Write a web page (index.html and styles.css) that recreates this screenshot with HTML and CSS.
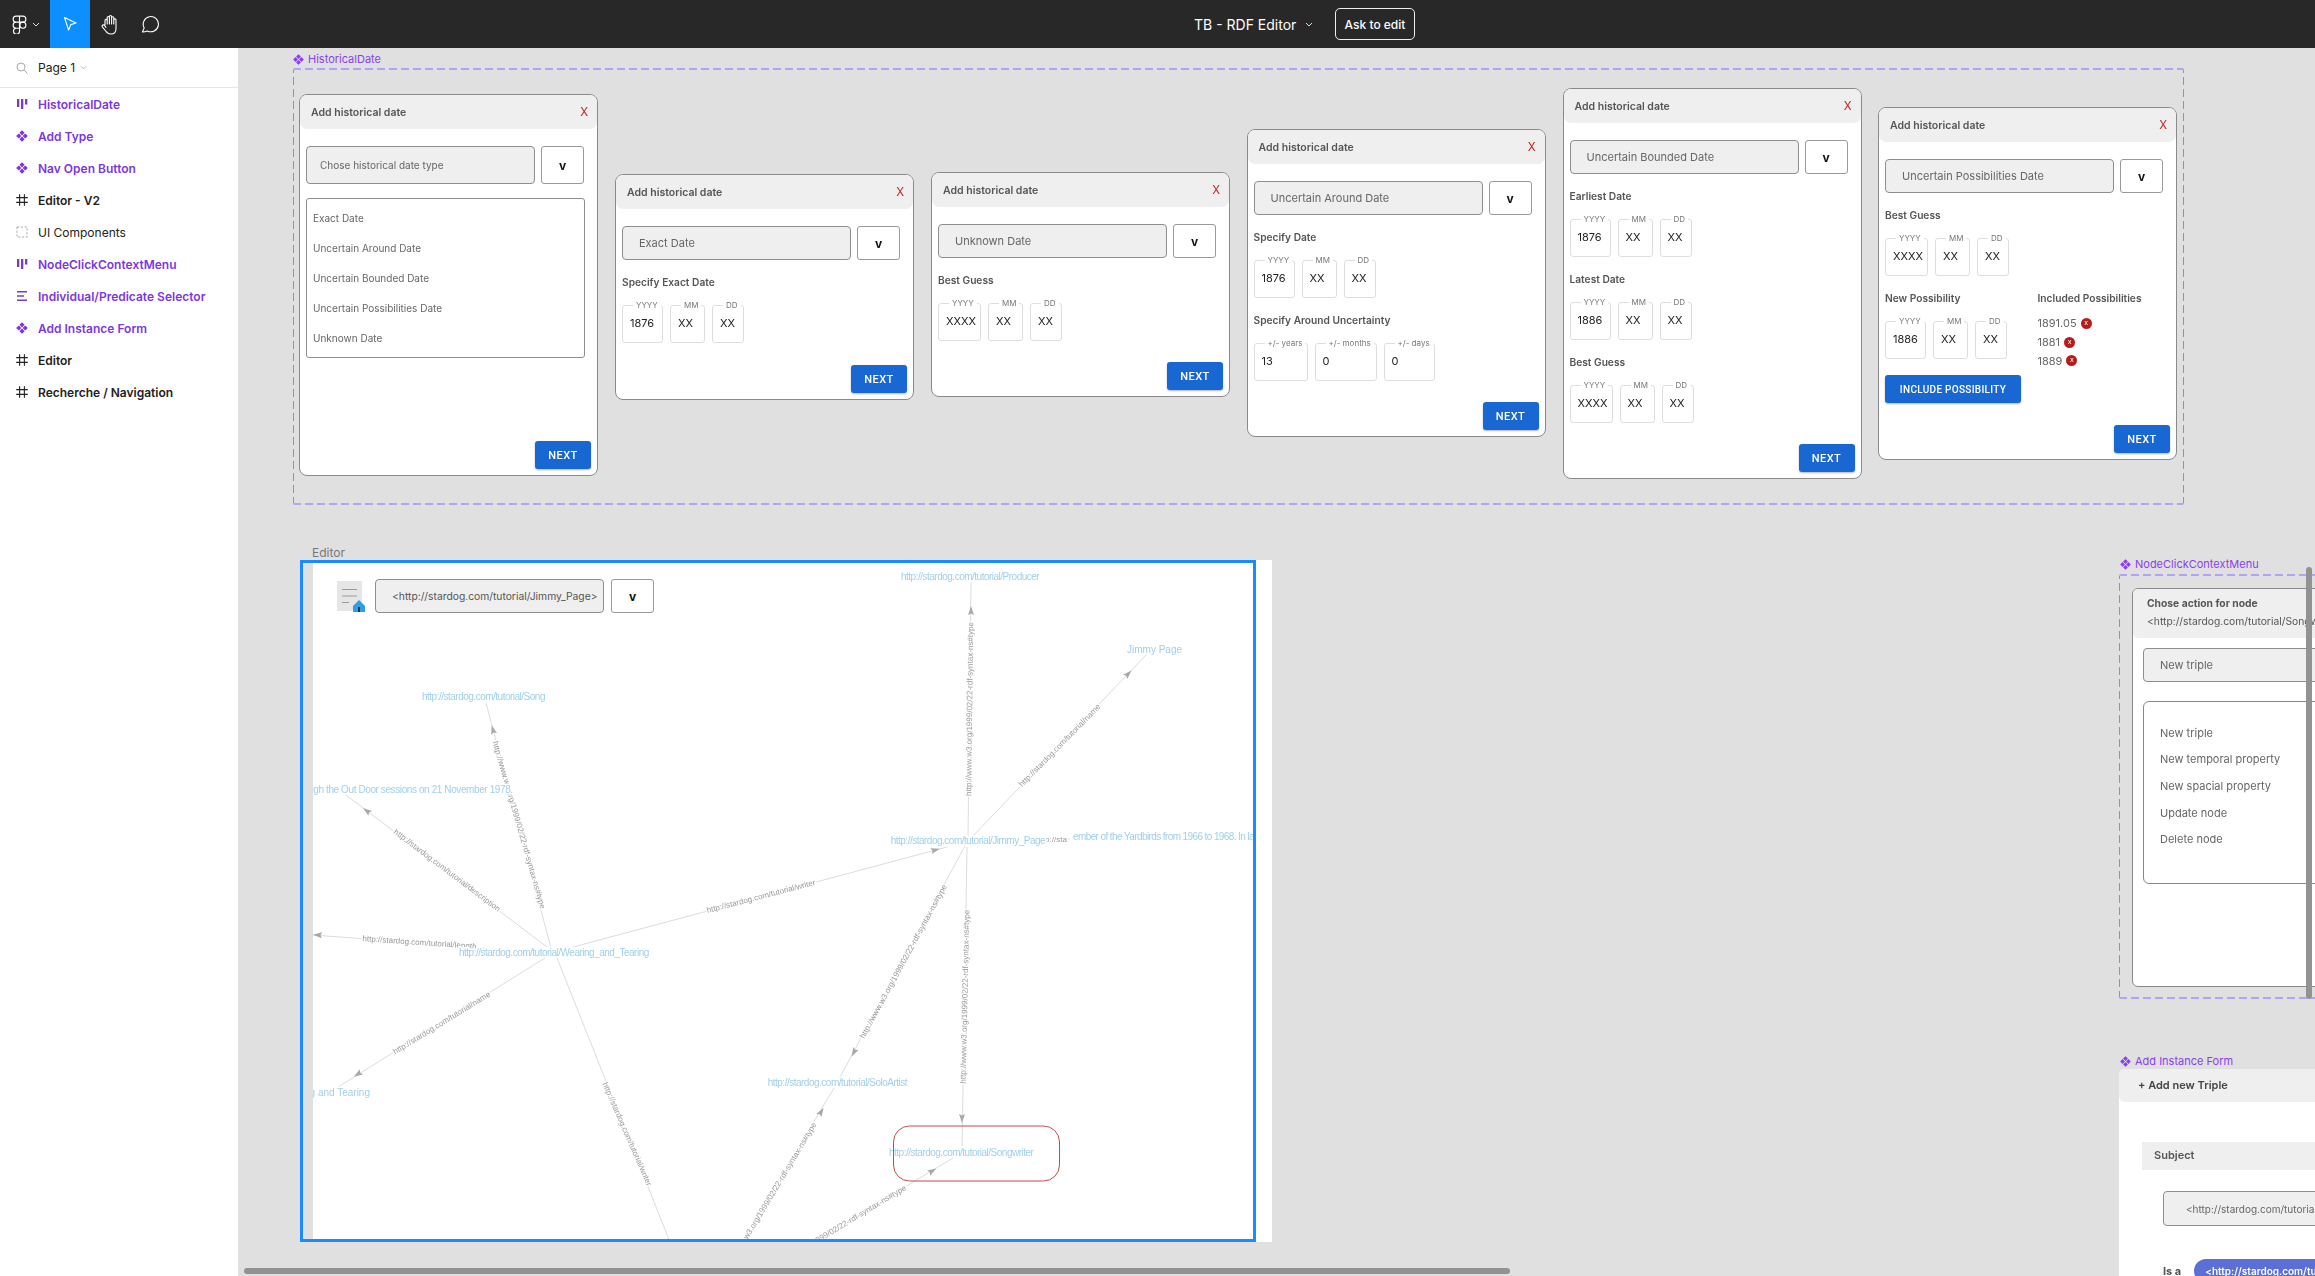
FILE: index.html
```html
<!DOCTYPE html>
<html lang="en">
<head>
    <meta charset="UTF-8">
    <title>TB - RDF Editor</title>
    <link rel="stylesheet" href="styles.css">
</head>
<body>
    <svg class="sprite" width="0" height="0">
        <symbol id="i-component" viewBox="0 0 12 12">
            <path d="M6 .2 8.6 2.8 6 5.4 3.4 2.8ZM2.8 3.4 5.4 6 2.8 8.6 .2 6ZM9.2 3.4 11.8 6 9.2 8.6 6.6 6ZM6 6.6 8.6 9.2 6 11.8 3.4 9.2Z" fill="currentColor"/>
        </symbol>
        <symbol id="i-bars" viewBox="0 0 12 12">
            <path d="M1 1h2.3v8H1ZM5 1h2.3v10H5ZM9 1h2.3v5.5H9Z" fill="currentColor"/>
        </symbol>
        <symbol id="i-lines" viewBox="0 0 12 12">
            <path d="M1 1h10v1.6H1ZM1 5.2h7v1.6H1ZM1 9.4h10V11H1Z" fill="currentColor"/>
        </symbol>
        <symbol id="i-hash" viewBox="0 0 12 12">
            <path d="M3.6 .2v11.6M8.4 .2v11.6M.2 3.6h11.6M.2 8.4h11.6" fill="none" stroke="currentColor" stroke-width="1.1"/>
        </symbol>
        <symbol id="i-dashed" viewBox="0 0 12 12">
            <rect x="1" y="1" width="10" height="10" fill="none" stroke="#aaa" stroke-width="1" stroke-dasharray="2.2 1.6"/>
        </symbol>
        <symbol id="i-chevron" viewBox="0 0 8 5">
            <path d="M1 1 4 4 7 1" fill="none" stroke="currentColor" stroke-width="1"/>
        </symbol>
    </svg>

    <header class="topbar">
        <div class="tools">
            <div class="tool-logo">
                <svg width="17" height="19" viewBox="1 0 13 17" fill="none" stroke="#fff" stroke-width="1">
                    <path d="M7.5 1H4.5a2.7 2.7 0 0 0 0 5.4h3ZM7.5 1h3a2.7 2.7 0 0 1 0 5.4h-3ZM7.5 6.4H4.5a2.7 2.7 0 0 0 0 5.4h3ZM7.5 11.8H4.5a2.7 2.7 0 1 0 3 2.7Z"/>
                    <circle cx="10.5" cy="9.1" r="2.7"/>
                </svg>
                <svg class="chev-white" width="8" height="5"><use href="#i-chevron"/></svg>
            </div>
            <div class="tool tool-active">
                <svg width="16" height="16" viewBox="0 0 16 16"><path d="M2.5 1.5 14 7 8.8 8.6 6.6 14Z" fill="none" stroke="#fff" stroke-width="1.1" stroke-linejoin="round"/></svg>
            </div>
            <div class="tool">
                <svg width="20" height="21" viewBox="0 0 20 21"><path d="M5 11V6.5a1.1 1.1 0 0 1 2.2 0V10M7.2 10V3.6a1.1 1.1 0 0 1 2.2 0V10M9.4 10V2.6a1.1 1.1 0 0 1 2.2 0V10M11.6 10V3.8a1.1 1.1 0 0 1 2.2 0V10M13.8 10V6a1.1 1.1 0 0 1 2.2 0v8.5c0 3.2-2 5.5-5 5.5-2.5 0-4-1-5.3-3L2.3 12.800c-.9-1.5 1.2-2.7 2.2-1.3L6 13.400" fill="none" stroke="#fff" stroke-width="1.1" stroke-linecap="round" stroke-linejoin="round"/></svg>
            </div>
            <div class="tool">
                <svg width="18" height="18" viewBox="0 0 18 18"><path d="M1.5 17 3.2 12.900A7.6 7.6 0 1 1 6.3 15.900C4.700 16.700 3 17 1.500 17Z" fill="none" stroke="#fff" stroke-width="1.1" stroke-linejoin="round"/></svg>
            </div>
        </div>
        <div class="doc-title">
            <span>TB - RDF Editor</span>
            <svg class="chev-white" width="8" height="5"><use href="#i-chevron"/></svg>
        </div>
        <button class="ask-btn">Ask to edit</button>
    </header>

    <div class="workspace">
        <aside class="sidebar">
            <div class="page-row">
                <svg width="12" height="12" viewBox="0 0 12 12" fill="none" stroke="#aaa" stroke-width="1"><circle cx="5" cy="5" r="4"/><path d="M8 8l3.5 3.5"/></svg>
                <span class="page-name">Page 1</span>
                <svg class="chev-gray" width="7" height="5"><use href="#i-chevron"/></svg>
            </div>
            <ul class="layers">
                <li class="layer purple"><svg width="12" height="12"><use href="#i-bars"/></svg>HistoricalDate</li>
                <li class="layer purple"><svg width="12" height="12"><use href="#i-component"/></svg>Add Type</li>
                <li class="layer purple"><svg width="12" height="12"><use href="#i-component"/></svg>Nav Open Button</li>
                <li class="layer dark"><svg width="12" height="12"><use href="#i-hash"/></svg>Editor - V2</li>
                <li class="layer"><svg width="12" height="12"><use href="#i-dashed"/></svg>UI Components</li>
                <li class="layer purple"><svg width="12" height="12"><use href="#i-bars"/></svg>NodeClickContextMenu</li>
                <li class="layer purple"><svg width="12" height="12"><use href="#i-lines"/></svg>Individual/Predicate Selector</li>
                <li class="layer purple"><svg width="12" height="12"><use href="#i-component"/></svg>Add Instance Form</li>
                <li class="layer dark"><svg width="12" height="12"><use href="#i-hash"/></svg>Editor</li>
                <li class="layer dark"><svg width="12" height="12"><use href="#i-hash"/></svg>Recherche / Navigation</li>
            </ul>
        </aside>

        <main class="canvas">
            <div class="frame-label label-historical"><svg width="11" height="11"><use href="#i-component"/></svg>HistoricalDate</div>
            <div class="dashed-frame frame-historical"></div>

            <section class="card card-type">
                <div class="card-head"><span>Add historical date</span><span class="close">X</span></div>
                <div class="card-body">
                    <div class="select-row tall">
                        <div class="select pad-small">Chose historical date type</div>
                        <div class="select-btn">v</div>
                    </div>
                    <ul class="type-list">
                        <li>Exact Date</li>
                        <li>Uncertain Around Date</li>
                        <li>Uncertain Bounded Date</li>
                        <li>Uncertain Possibilities Date</li>
                        <li>Unknown Date</li>
                    </ul>
                    <button class="primary next">NEXT</button>
                </div>
            </section>

            <section class="card card-exact">
                <div class="card-head"><span>Add historical date</span><span class="close">X</span></div>
                <div class="card-body">
                    <div class="select-row">
                        <div class="select">Exact Date</div>
                        <div class="select-btn">v</div>
                    </div>
                    <h4>Specify Exact Date</h4>
                    <div class="date-row">
                        <fieldset class="f-y"><legend>YYYY</legend>1876</fieldset>
                        <fieldset class="f-m"><legend>MM</legend>XX</fieldset>
                        <fieldset class="f-d"><legend>DD</legend>XX</fieldset>
                    </div>
                    <button class="primary next">NEXT</button>
                </div>
            </section>

            <section class="card card-unknown">
                <div class="card-head"><span>Add historical date</span><span class="close">X</span></div>
                <div class="card-body">
                    <div class="select-row">
                        <div class="select">Unknown Date</div>
                        <div class="select-btn">v</div>
                    </div>
                    <h4>Best Guess</h4>
                    <div class="date-row">
                        <fieldset class="f-yw"><legend>YYYY</legend>XXXX</fieldset>
                        <fieldset class="f-m"><legend>MM</legend>XX</fieldset>
                        <fieldset class="f-d"><legend>DD</legend>XX</fieldset>
                    </div>
                    <button class="primary next">NEXT</button>
                </div>
            </section>

            <section class="card card-around">
                <div class="card-head"><span>Add historical date</span><span class="close">X</span></div>
                <div class="card-body">
                    <div class="select-row">
                        <div class="select">Uncertain Around Date</div>
                        <div class="select-btn">v</div>
                    </div>
                    <h4>Specify Date</h4>
                    <div class="date-row">
                        <fieldset class="f-y"><legend>YYYY</legend>1876</fieldset>
                        <fieldset class="f-m"><legend>MM</legend>XX</fieldset>
                        <fieldset class="f-d"><legend>DD</legend>XX</fieldset>
                    </div>
                    <h4>Specify Around Uncertainty</h4>
                    <div class="date-row">
                        <fieldset class="f-years"><legend>+/- years</legend>13</fieldset>
                        <fieldset class="f-months"><legend>+/- months</legend>0</fieldset>
                        <fieldset class="f-days"><legend>+/- days</legend>0</fieldset>
                    </div>
                    <button class="primary next">NEXT</button>
                </div>
            </section>

            <section class="card card-bounded">
                <div class="card-head"><span>Add historical date</span><span class="close">X</span></div>
                <div class="card-body">
                    <div class="select-row">
                        <div class="select">Uncertain Bounded Date</div>
                        <div class="select-btn">v</div>
                    </div>
                    <h4>Earliest Date</h4>
                    <div class="date-row">
                        <fieldset class="f-y"><legend>YYYY</legend>1876</fieldset>
                        <fieldset class="f-m"><legend>MM</legend>XX</fieldset>
                        <fieldset class="f-d"><legend>DD</legend>XX</fieldset>
                    </div>
                    <h4>Latest Date</h4>
                    <div class="date-row">
                        <fieldset class="f-y"><legend>YYYY</legend>1886</fieldset>
                        <fieldset class="f-m"><legend>MM</legend>XX</fieldset>
                        <fieldset class="f-d"><legend>DD</legend>XX</fieldset>
                    </div>
                    <h4>Best Guess</h4>
                    <div class="date-row">
                        <fieldset class="f-yw"><legend>YYYY</legend>XXXX</fieldset>
                        <fieldset class="f-m"><legend>MM</legend>XX</fieldset>
                        <fieldset class="f-d"><legend>DD</legend>XX</fieldset>
                    </div>
                    <button class="primary next">NEXT</button>
                </div>
            </section>

            <section class="card card-possible">
                <div class="card-head"><span>Add historical date</span><span class="close">X</span></div>
                <div class="card-body">
                    <div class="select-row">
                        <div class="select">Uncertain Possibilities Date</div>
                        <div class="select-btn">v</div>
                    </div>
                    <h4>Best Guess</h4>
                    <div class="date-row">
                        <fieldset class="f-yw"><legend>YYYY</legend>XXXX</fieldset>
                        <fieldset class="f-m"><legend>MM</legend>XX</fieldset>
                        <fieldset class="f-d"><legend>DD</legend>XX</fieldset>
                    </div>
                    <div class="possible-cols">
                        <div class="possible-new">
                            <h4>New Possibility</h4>
                            <div class="date-row">
                                <fieldset class="f-y"><legend>YYYY</legend>1886</fieldset>
                                <fieldset class="f-m"><legend>MM</legend>XX</fieldset>
                                <fieldset class="f-d"><legend>DD</legend>XX</fieldset>
                            </div>
                            <button class="primary include">INCLUDE POSSIBILITY</button>
                        </div>
                        <div class="possible-list">
                            <h4>Included Possibilities</h4>
                            <div class="possible-item">1891.05 <span class="remove">x</span></div>
                            <div class="possible-item">1881 <span class="remove">x</span></div>
                            <div class="possible-item">1889 <span class="remove">x</span></div>
                        </div>
                    </div>
                    <button class="primary next">NEXT</button>
                </div>
            </section>

            <div class="editor-label">Editor</div>
            <section class="editor-sheet">
                <div class="editor-bar">
                    <svg class="doc-icon" width="28" height="31" viewBox="0 0 28 31">
                        <rect width="25" height="30" fill="#e6e6e6"/>
                        <path d="M5 8.5h15M5 15h15M5 21.5h7" stroke="#999" stroke-width="1"/>
                        <path d="M16 31V25L22 19 28 25V31Z" fill="#2d9fe6"/>
                        <rect x="21" y="26" width="2" height="5" fill="#234"/>
                    </svg>
                    <div class="select select-uri">&lt;http://stardog.com/tutorial/Jimmy_Page&gt;</div>
                    <div class="select-btn">v</div>
                </div>
                <svg class="graph" width="943" height="682" viewBox="313 560 943 682">
                    <g class="edges">
                        <line x1="551" y1="948" x2="486" y2="703"/>
                        <line x1="547" y1="947" x2="346" y2="795"/>
                        <line x1="487" y1="948" x2="313" y2="935"/>
                        <line x1="545" y1="958" x2="338" y2="1087"/>
                        <line x1="557" y1="958" x2="670" y2="1242"/>
                        <line x1="573" y1="947" x2="947" y2="847"/>
                        <line x1="968" y1="837" x2="971" y2="582"/>
                        <line x1="973" y1="836" x2="1147" y2="654"/>
                        <line x1="967" y1="847" x2="962" y2="1148"/>
                        <line x1="965" y1="846" x2="834" y2="1088"/>
                        <line x1="742" y1="1241" x2="834" y2="1088"/>
                        <line x1="815" y1="1241" x2="953" y2="1158"/>
                        <line x1="1046" y1="839" x2="1070" y2="839"/>
                    </g>
                    <g class="arrows">
                        <path transform="translate(493 730) rotate(-105)" d="M5 0-4-3-2.5 0-4 3Z"/>
                        <path transform="translate(367 811) rotate(-143)" d="M5 0-4-3-2.5 0-4 3Z"/>
                        <path transform="translate(318 935) rotate(-176)" d="M5 0-4-3-2.5 0-4 3Z"/>
                        <path transform="translate(358 1074) rotate(148)" d="M5 0-4-3-2.5 0-4 3Z"/>
                        <path transform="translate(935 850) rotate(-15)" d="M5 0-4-3-2.5 0-4 3Z"/>
                        <path transform="translate(971 611) rotate(-90)" d="M5 0-4-3-2.5 0-4 3Z"/>
                        <path transform="translate(1128 674) rotate(-46)" d="M5 0-4-3-2.5 0-4 3Z"/>
                        <path transform="translate(962 1118) rotate(91)" d="M5 0-4-3-2.5 0-4 3Z"/>
                        <path transform="translate(854 1052) rotate(118)" d="M5 0-4-3-2.5 0-4 3Z"/>
                        <path transform="translate(821 1112) rotate(-59)" d="M5 0-4-3-2.5 0-4 3Z"/>
                        <path transform="translate(932 1171) rotate(-31)" d="M5 0-4-3-2.5 0-4 3Z"/>
                    </g>
                    <g class="edge-labels">
                        <text transform="translate(519 825) rotate(74)">http://www.w3.org/1999/02/22-rdf-syntax-ns#type</text>
                        <text transform="translate(447 870.5) rotate(37)">http://stardog.com/tutorial/description</text>
                        <text transform="translate(419.5 942.5) rotate(4)">http://stardog.com/tutorial/length</text>
                        <text transform="translate(441.7 1023) rotate(-31.6)">http://stardog.com/tutorial/name</text>
                        <text transform="translate(627 1134) rotate(66.4)">http://stardog.com/tutorial/writer</text>
                        <text transform="translate(761 896.5) rotate(-14.6)">http://stardog.com/tutorial/writer</text>
                        <text transform="translate(969.7 709) rotate(-89.3)">http://www.w3.org/1999/02/22-rdf-syntax-ns#type</text>
                        <text transform="translate(1059.7 745.5) rotate(-45.4)">http://stardog.com/tutorial/name</text>
                        <text transform="translate(965 996.7) rotate(-88.8)">http://www.w3.org/1999/02/22-rdf-syntax-ns#type</text>
                        <text transform="translate(903.5 961.5) rotate(-61.5)">http://www.w3.org/1999/02/22-rdf-syntax-ns#type</text>
                        <text transform="translate(770 1197.6) rotate(-59)">http://www.w3.org/1999/02/22-rdf-syntax-ns#type</text>
                        <text transform="translate(831 1232) rotate(-31)">http://www.w3.org/1999/02/22-rdf-syntax-ns#type</text>
                        <text transform="translate(1056 839)">p://sta</text>
                    </g>
                    <g class="node-labels">
                        <text class="url" x="422" y="696">http://stardog.com/tutorial/Song</text>
                        <text class="note" x="512.7" y="789" text-anchor="end">Jimmy Page recorded through the Out Door sessions on 21 November 1978.</text>
                        <text class="url" x="459" y="952">http://stardog.com/tutorial/Wearing_and_Tearing</text>
                        <text x="370" y="1092" text-anchor="end">Wearing and Tearing</text>
                        <text class="url" x="901" y="576">http://stardog.com/tutorial/Producer</text>
                        <text x="1127" y="649">Jimmy Page</text>
                        <text class="url" x="890.7" y="840">http://stardog.com/tutorial/Jimmy_Page</text>
                        <text class="note-tight" x="1073" y="836">ember of the Yardbirds from 1966 to 1968. In later years</text>
                        <text class="url" x="767.7" y="1082">http://stardog.com/tutorial/SoloArtist</text>
                        <text class="url" x="889" y="1152">http://stardog.com/tutorial/Songwriter</text>
                    </g>
                    <rect class="node-mark" x="893.5" y="1126" width="166" height="55" rx="16"/>
                </svg>
            </section>
            <div class="editor-outline"></div>

            <div class="frame-label label-menu"><svg width="11" height="11"><use href="#i-component"/></svg>NodeClickContextMenu</div>
            <div class="dashed-frame frame-menu"></div>
            <section class="context-card">
                <div class="context-head">
                    <strong>Chose action for node</strong>
                    <span>&lt;http://stardog.com/tutorial/Songwriter&gt;</span>
                </div>
                <div class="context-body">
                    <div class="select select-context">New triple</div>
                    <ul class="context-list">
                        <li>New triple</li>
                        <li>New temporal property</li>
                        <li>New spacial property</li>
                        <li>Update node</li>
                        <li>Delete node</li>
                    </ul>
                </div>
            </section>

            <div class="frame-label label-form"><svg width="11" height="11"><use href="#i-component"/></svg>Add Instance Form</div>
            <section class="form-card">
                <div class="form-head">+ Add new Triple</div>
                <div class="subject">
                    <div class="subject-head">Subject</div>
                    <div class="subject-body">
                        <div class="select select-subject">&lt;http://stardog.com/tutorial/Songwriter&gt;</div>
                        <div class="is-a"><strong>Is a</strong><span class="pill">&lt;http://stardog.com/tutorial/Songwriter&gt;</span></div>
                    </div>
                </div>
            </section>

            <div class="scroll-v"></div>
            <div class="scroll-h"></div>
        </main>
    </div>
</body>
</html>
```

FILE: styles.css
```css
* {
    box-sizing: border-box;
}
html, body {
    margin: 0;
    height: 100%;
    overflow: hidden;
}
body {
    font-family: Inter, "Liberation Sans", sans-serif;
    font-size: 11px;
    color: #222;
    display: flex;
    flex-direction: column;
}
.sprite {
    position: absolute;
}
ul {
    list-style: none;
    margin: 0;
    padding: 0;
}

/* top bar */
.topbar {
    height: 48px;
    flex: none;
    background: #282828;
    color: #fff;
    display: flex;
    align-items: center;
}
.tools {
    display: flex;
    height: 48px;
    width: 170px;
}
.tool-logo {
    width: 50px;
    display: flex;
    align-items: center;
    padding-left: 11px;
    gap: 4px;
}
.tool {
    width: 40px;
    display: flex;
    align-items: center;
    justify-content: center;
}
.tool-active {
    background: #0d8fff;
}
.chev-white {
    color: #ddd;
}
.doc-title {
    margin-left: 1024px;
    font-size: 14px;
    display: flex;
    align-items: center;
    gap: 9px;
    width: 141px;
}
.ask-btn {
    width: 80px;
    height: 32px;
    background: transparent;
    color: #fff;
    border: 1px solid #eee;
    border-radius: 5px;
    font: 500 12px Inter, sans-serif;
}

/* left panel */
.workspace {
    flex: 1;
    display: flex;
    min-height: 0;
}
.sidebar {
    width: 238px;
    flex: none;
    background: #fff;
}
.page-row {
    height: 40px;
    border-bottom: 1px solid #e5e5e5;
    display: flex;
    align-items: center;
    padding-left: 16px;
    font-size: 12px;
}
.page-name {
    margin: 0 5px 0 10px;
}
.chev-gray {
    color: #aaa;
}
.layer {
    height: 32px;
    display: flex;
    align-items: center;
    gap: 10px;
    padding-left: 16px;
    font-size: 12px;
}
.purple {
    color: #7b36e8;
    font-weight: 600;
}
.dark {
    font-weight: 600;
}

/* canvas, everything in it sits on a free board */
.canvas {
    flex: 1;
    position: relative;
    overflow: hidden;
    background: #e0e0e0;
}
.frame-label {
    position: absolute;
    display: flex;
    align-items: center;
    gap: 4px;
    color: #8a3df2;
    font-size: 11px;
    line-height: 14px;
}
.label-historical { left: 55px; top: 4px; }
.label-menu { left: 1882px; top: 509px; }
.label-form { left: 1882px; top: 1006px; }
.dashed-frame {
    position: absolute;
    border-radius: 2px;
    background:
        repeating-linear-gradient(90deg, #b3a2f8 0 8px, transparent 8px 12px) left top / 100% 2px no-repeat,
        repeating-linear-gradient(90deg, #b3a2f8 0 8px, transparent 8px 12px) left bottom / 100% 2px no-repeat,
        repeating-linear-gradient(0deg, #9c7ff6 0 8px, transparent 8px 12px) left top / 1px 100% no-repeat,
        repeating-linear-gradient(0deg, #9c7ff6 0 8px, transparent 8px 12px) right top / 1px 100% no-repeat;
}
.frame-historical { left: 54.5px; top: 19.5px; width: 1891px; height: 437px; }
.frame-menu { left: 1881px; top: 526px; width: 500px; height: 425px; }

/* date cards */
.card {
    position: absolute;
    width: 299px;
    background: #fff;
    border: 1px solid #8a8a8a;
    border-radius: 8px;
    display: flex;
    flex-direction: column;
    filter: blur(.25px);
}
.card-type { left: 61px; top: 46px; height: 382px; }
.card-exact { left: 377px; top: 126px; height: 226px; }
.card-unknown { left: 693px; top: 124px; height: 225px; }
.card-around { left: 1008.5px; top: 81px; height: 308px; }
.card-bounded { left: 1324.5px; top: 40px; height: 391px; }
.card-possible { left: 1640px; top: 59px; height: 353px; }
.card-head {
    height: 34px;
    flex: none;
    background: #efefef;
    border-radius: 7px;
    display: flex;
    align-items: center;
    justify-content: space-between;
    padding: 0 9px 0 11px;
    font-weight: 600;
    font-size: 10.5px;
    color: #555;
}
.close {
    color: #c62020;
    font-weight: 400;
    font-size: 11.5px;
}
.card-body {
    flex: 1;
    display: flex;
    flex-direction: column;
    padding: 17px 6px 6px 6px;
}
.select-row {
    display: flex;
    gap: 6px;
    height: 34px;
}
.select-row.tall {
    height: 38px;
}
.select {
    width: 229px;
    flex: none;
    background: #efefef;
    border: 1px solid #8e8e8e;
    border-radius: 4px;
    display: flex;
    align-items: center;
    padding-left: 16px;
    color: #666;
    white-space: nowrap;
    overflow: hidden;
}
.pad-small {
    padding-left: 13px;
    font-size: 10px;
}
.select-btn {
    width: 43px;
    background: #fff;
    border: 1px solid #999;
    border-radius: 3px;
    display: flex;
    align-items: center;
    justify-content: center;
    font-weight: 700;
    font-size: 12px;
    color: #111;
}
.type-list {
    margin-top: 14px;
    width: 279px;
    height: 160px;
    border: 1px solid #8e8e8e;
    border-radius: 3px;
    padding: 4px 6px;
    color: #666;
    font-size: 10px;
}
.type-list li {
    height: 30px;
    line-height: 30px;
}
h4 {
    margin: 15px 0 11px;
    font-size: 10.2px;
    line-height: 14px;
    font-weight: 600;
    color: #555;
}
.date-row {
    display: flex;
    gap: 7px;
}
fieldset {
    margin: 0;
    height: 43px;
    padding: 0 0 0 7px;
    border: 1px solid #dedede;
    border-radius: 3px;
    line-height: 27px;
    color: #222;
    font-size: 11px;
}
legend {
    margin-left: 3px;
    padding: 0 3px;
    font-size: 8px;
    line-height: 10px;
    color: #777;
    white-space: nowrap;
}
.f-y { width: 41px; }
.f-yw { width: 43px; }
.f-m { width: 35px; }
.f-d { width: 32px; }
.f-years { width: 54px; }
.f-months { width: 62px; }
.f-days { width: 51px; }
.primary {
    background: #1967d2;
    color: #fff;
    border: none;
    border-radius: 3px;
    height: 28px;
    font: 500 11px Roboto, sans-serif;
    letter-spacing: .4px;
    box-shadow: 0 1px 2px rgba(0, 0, 0, .3);
}
.next {
    width: 56px;
    margin-top: auto;
    align-self: flex-end;
}
.include {
    width: 136px;
    margin-top: 16px;
    font-size: 10px;
    letter-spacing: .3px;
}
.possible-cols {
    display: flex;
}
.possible-new {
    width: 152.5px;
}
.possible-item {
    display: flex;
    align-items: center;
    gap: 4px;
    height: 18.7px;
    color: #666;
    font-size: 11px;
}
.possible-list h4 {
    margin-bottom: 9px;
}
.remove {
    width: 11px;
    height: 11px;
    border-radius: 50%;
    background: #b71c1c;
    color: #fff;
    font-size: 7px;
    line-height: 10px;
    text-align: center;
}

/* editor */
.editor-label {
    position: absolute;
    left: 74px;
    top: 497px;
    color: #777;
    font-size: 12px;
}
.editor-sheet {
    position: absolute;
    left: 75px;
    top: 512px;
    width: 959px;
    height: 682px;
    background: #fff;
}
.editor-outline {
    position: absolute;
    left: 62px;
    top: 512px;
    width: 956px;
    height: 682px;
    border: 3px solid #1a8cff;
}
.editor-bar {
    position: relative;
    z-index: 1;
    display: flex;
    height: 53px;
    padding: 19px 0 0 24px;
    gap: 7px;
}
.doc-icon {
    margin: 2px 3px 0 0;
}
.select-uri {
    font-size: 10.3px;
    color: #555;
}
.graph {
    position: absolute;
    left: 0;
    top: 0;
    filter: blur(.35px);
}
.edges line {
    stroke: #dcdcdc;
    stroke-width: 1;
}
.arrows path {
    fill: #a8a8a8;
}
.edge-labels text {
    font: 8px "Liberation Sans", sans-serif;
    fill: #999;
    text-anchor: middle;
    dominant-baseline: central;
    paint-order: stroke;
    stroke: #fff;
    stroke-width: 3px;
}
.node-labels text {
    font: 10px "Liberation Sans", sans-serif;
    fill: #9fd0ea;
    dominant-baseline: central;
    paint-order: stroke;
    stroke: #fff;
    stroke-width: 3px;
}
.node-labels .url {
    letter-spacing: -.5px;
}
.node-labels .note {
    letter-spacing: -.4px;
}
.node-labels .note-tight {
    letter-spacing: -.6px;
}
.node-mark {
    fill: none;
    stroke: #c44a4a;
    stroke-width: 1;
}

/* right side, cut by the window */
.context-card {
    position: absolute;
    left: 1894px;
    top: 539.5px;
    width: 500px;
    height: 399px;
    background: #fff;
    border: 1px solid #888;
    border-radius: 6px;
    filter: blur(.25px);
}
.context-head {
    height: 49px;
    background: #efefef;
    border-radius: 5px;
    padding: 8px 14px;
    display: flex;
    flex-direction: column;
    gap: 5px;
    color: #555;
    font-size: 10.3px;
    line-height: 13px;
    white-space: nowrap;
}
.context-body {
    padding: 10px 0 0 10px;
}
.select-context {
    height: 34px;
    width: 400px;
}
.context-list {
    margin-top: 19px;
    width: 400px;
    height: 183px;
    border: 1px solid #888;
    border-radius: 6px;
    padding: 18px 0 0 16px;
    color: #666;
}
.context-list li {
    height: 26.7px;
    line-height: 26px;
}
.form-card {
    position: absolute;
    left: 1881px;
    top: 1021px;
    width: 500px;
    height: 300px;
    background: #fff;
    border-radius: 6px;
    filter: blur(.25px);
}
.form-head {
    height: 33px;
    background: #efefef;
    border-radius: 6px;
    padding-left: 19px;
    line-height: 32px;
    font-weight: 600;
    color: #444;
}
.subject {
    margin: 40px 0 0 23px;
}
.subject-head {
    height: 28px;
    background: #efefef;
    padding-left: 12px;
    line-height: 27px;
    font-weight: 600;
    color: #555;
}
.subject-body {
    padding: 21px 0 0 21px;
}
.select-subject {
    width: 400px;
    height: 35px;
    padding-left: 22px;
    font-size: 10px;
}
.is-a {
    margin-top: 33px;
    display: flex;
    align-items: center;
    gap: 13px;
    color: #555;
    white-space: nowrap;
}
.pill {
    background: #5b6fd6;
    color: #fff;
    font-weight: 600;
    font-size: 10px;
    border-radius: 12px;
    padding: 0 11px;
    line-height: 24px;
}

/* scrollbars of the viewer */
.scroll-v {
    position: absolute;
    left: 2068px;
    top: 519px;
    width: 6px;
    height: 432px;
    border-radius: 3px;
    background: #929292;
}
.scroll-h {
    position: absolute;
    left: 6px;
    top: 1220px;
    width: 1266px;
    height: 6px;
    border-radius: 3px;
    background: #929292;
}
```
